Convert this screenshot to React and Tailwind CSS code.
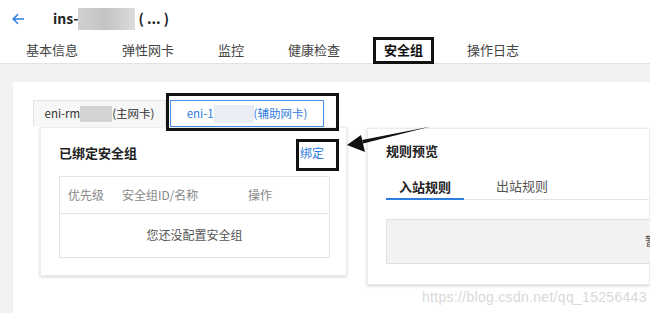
import React from "react";

const font = { fontFamily: '"Noto Sans CJK SC", "Noto Sans", sans-serif' };

function Blur({ className }) {
  return <span className={"inline-block " + className}></span>;
}

export default function App() {
  return (
    <div className="relative w-[650px] h-[313px] overflow-hidden bg-white text-[#333]" style={font}>
      {/* header */}
      <header className="h-[37px] flex items-center pl-[12px]">
        <svg width="13" height="12" viewBox="0 0 13 12" className="text-[#2f7de1]">
          <path d="M12 6H1.5M6 1.2L1.2 6L6 10.8" fill="none" stroke="currentColor" strokeWidth="1.6" />
        </svg>
        <div className="ml-[28px] flex items-center text-[14px] font-bold text-[#222]">
          <span>ins-</span>
          <Blur className="w-[57px] h-[22px] bg-gradient-to-r from-[#d0d0d0] via-[#c4c4c4] to-[#dcdcdc] -ml-[1px]" />
          <span className="ml-[4px]">( ... )</span>
        </div>
      </header>

      {/* tabs */}
      <nav className="h-[27px] flex items-center gap-[44px] pl-[26px] border-b border-[#e2e2e2] text-[13px] text-[#444]">
        <span>基本信息</span>
        <span>弹性网卡</span>
        <span>监控</span>
        <span>健康检查</span>
        <span className="font-bold text-[#111]">安全组</span>
        <span>操作日志</span>
      </nav>

      {/* body */}
      <div className="bg-[#f2f2f2] h-[249px] pl-[13px] pt-[18px]">
        <div className="bg-white h-full pt-[18px]">
          {/* eni tabs */}
          <div className="flex pl-[20px] gap-[4px]">
            <div className="w-[133px] h-[26px] flex items-center justify-center bg-[#f7f7f7] border border-[#e3e3e3] border-b-0 text-[11.5px] text-[#333]">
              <span>eni-rm</span>
              <Blur className="w-[32px] h-[16px] bg-[#d4d4d4]" />
              <span>(主网卡)</span>
            </div>
            <div className="w-[154px] h-[27px] flex items-center justify-center border border-[#4a8fe6] text-[11.5px] text-[#2f7de1]">
              <span>eni-1</span>
              <Blur className="w-[40px] h-[18px] bg-[#e9eef6]" />
              <span>(辅助网卡)</span>
            </div>
          </div>

          <div className="flex items-start pl-[27px] gap-[20px]">
            {/* left panel */}
            <section className="w-[307px] h-[149px] bg-white border border-[#ececec] shadow-[0_1px_3px_rgba(0,0,0,0.18)] px-[18px] pt-[15px]">
              <div className="flex justify-between items-center pr-[4px]">
                <h3 className="text-[13px] font-bold text-[#222]">已绑定安全组</h3>
                <span className="text-[12px] text-[#2f7de1]">绑定</span>
              </div>
              <div className="mt-[13px] border border-[#e3e3e3] w-[271px]">
                <div className="h-[37px] flex items-center text-[12px] text-[#888] border-b border-[#e3e3e3] pl-[8px]">
                  <span className="w-[54px]">优先级</span>
                  <span className="w-[126px]">安全组ID/名称</span>
                  <span>操作</span>
                </div>
                <div className="h-[43px] flex items-center justify-center text-[12px] text-[#555]">
                  您还没配置安全组
                </div>
              </div>
            </section>

            {/* right panel */}
            <section className="flex-1 h-[157px] mt-[1px] bg-white border border-[#ececec] shadow-[0_1px_3px_rgba(0,0,0,0.18)] pl-[18px] pt-[12px]">
              <h3 className="text-[13px] font-bold text-[#222]">规则预览</h3>
              <div className="mt-[15px] flex items-end border-b border-[#e3e3e3] h-[24px] text-[13px]">
                <span className="w-[78px] h-full flex justify-center border-b-2 border-[#2f7de1] -mb-[1px] font-bold text-[#222]">入站规则</span>
                <span className="ml-[32px] h-full text-[#555]">出站规则</span>
              </div>
              <div className="mt-[19px] h-[45px] bg-[#f2f2f2] border border-[#e0e0e0] border-r-0 flex items-center justify-end text-[12px] text-[#555] -mr-[8px]">
                <span>暂</span>
              </div>
            </section>
          </div>
        </div>
      </div>

      {/* annotation boxes */}
      <div className="absolute left-[373px] top-[37px] w-[61px] h-[27px] border-[3px] border-[#111]"></div>
      <div className="absolute left-[166px] top-[93px] w-[173px] h-[38px] border-[3px] border-[#111]"></div>
      <div className="absolute left-[296px] top-[139px] w-[43px] h-[32px] border-[3px] border-[#111]"></div>

      {/* arrow */}
      <svg className="absolute left-0 top-0" width="650" height="313" viewBox="0 0 650 313">
        <path d="M431 126.5 L362 140 L363 143.5 Z" fill="#111" />
        <path d="M347 145 L361 135 L365 152 Z" fill="#111" />
      </svg>

      {/* watermark */}
      <div className="absolute left-[422px] top-[287px] text-[14px] text-[#d9d9d9] tracking-[0.3px]" style={{ fontFamily: '"Liberation Sans", Arial, sans-serif' }}>
        https://blog.csdn.net/qq_15256443
      </div>
    </div>
  );
}
